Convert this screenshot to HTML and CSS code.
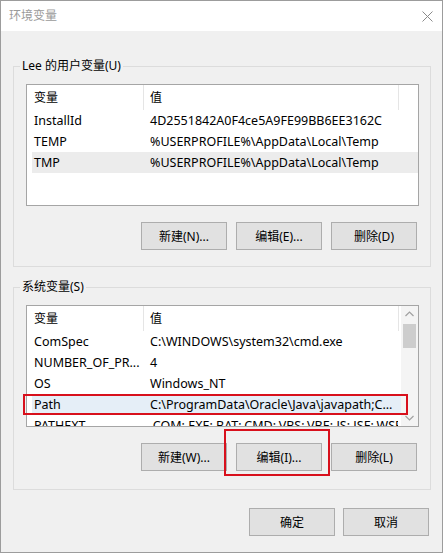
FILE: index.html
```html
<!DOCTYPE html>
<html lang="zh-CN">
<head>
<meta charset="utf-8">
<title>环境变量</title>
<link rel="stylesheet" href="styles.css">
</head>
<body>
<div class="window">
  <div class="titlebar">
    <span class="title">环境变量</span>
    <svg class="close" width="11" height="11" viewBox="0 0 11 11"><path d="M0.5 0.5 L10.5 10.5 M10.5 0.5 L0.5 10.5" stroke="#8a8a8a" stroke-width="1" fill="none"/></svg>
  </div>
  <div class="content">
    <fieldset class="group group-user">
      <legend>Lee 的用户变量(U)</legend>
      <div class="list">
        <div class="rows">
          <div class="row head"><span class="c1">变量</span><span class="c2">值</span></div>
          <div class="row"><span class="c1">InstallId</span><span class="c2">4D2551842A0F4ce5A9FE99BB6EE3162C</span></div>
          <div class="row"><span class="c1">TEMP</span><span class="c2">%USERPROFILE%\AppData\Local\Temp</span></div>
          <div class="row hover"><span class="c1">TMP</span><span class="c2">%USERPROFILE%\AppData\Local\Temp</span></div>
        </div>
      </div>
      <div class="btnrow">
        <button class="btn">新建(N)...</button>
        <button class="btn">编辑(E)...</button>
        <button class="btn">删除(D)</button>
      </div>
    </fieldset>
    <fieldset class="group group-sys">
      <legend>系统变量(S)</legend>
      <div class="list">
        <div class="rows">
          <div class="row head"><span class="c1">变量</span><span class="c2">值</span></div>
          <div class="row"><span class="c1">ComSpec</span><span class="c2">C:\WINDOWS\system32\cmd.exe</span></div>
          <div class="row"><span class="c1">NUMBER_OF_PR...</span><span class="c2">4</span></div>
          <div class="row"><span class="c1">OS</span><span class="c2">Windows_NT</span></div>
          <div class="row selected"><span class="c1">Path</span><span class="c2">C:\ProgramData\Oracle\Java\javapath;C...</span></div>
          <div class="row"><span class="c1">PATHEXT</span><span class="c2">.COM;.EXE;.BAT;.CMD;.VBS;.VBE;.JS;.JSE;.WSF;.WSH;.MSC</span></div>
        </div>
        <div class="scrollbar">
          <svg class="arrow" width="17" height="17" viewBox="0 0 17 17"><path d="M4.5 10 L8.5 6 L12.5 10" stroke="#a0a0a0" stroke-width="1.2" fill="none"/></svg>
          <div class="track"><div class="thumb"></div></div>
          <svg class="arrow" width="17" height="17" viewBox="0 0 17 17"><path d="M4.5 7 L8.5 11 L12.5 7" stroke="#a0a0a0" stroke-width="1.2" fill="none"/></svg>
        </div>
      </div>
      <div class="btnrow">
        <button class="btn">新建(W)...</button>
        <button class="btn">编辑(I)...</button>
        <button class="btn">删除(L)</button>
      </div>
    </fieldset>
    <div class="footer">
      <button class="btn">确定</button>
      <button class="btn">取消</button>
    </div>
  </div>
  <div class="mark mark-path"></div>
  <div class="mark mark-edit"></div>
</div>
</body>
</html>
```

FILE: styles.css
```css
* { box-sizing: border-box; }
html, body { margin: 0; padding: 0; background: #f0f0f0; }
body {
  font-family: "Noto Sans", "Noto Sans CJK SC", sans-serif;
  font-size: 12px;
  color: #000;
}
.window {
  position: relative;
  width: 443px;
  height: 553px;
  border: 1px solid #9c9c9c;
  background: #f0f0f0;
  display: flex;
  flex-direction: column;
}
.titlebar {
  height: 30px;
  flex: none;
  background: #fff;
  display: flex;
  align-items: center;
  justify-content: space-between;
  padding: 0 9px 0 8px;
}
.title { color: #9a9a9a; font-size: 12px; line-height: 16px; }
.content {
  padding: 0 11px 0 12px;
  display: flex;
  flex-direction: column;
}
.group {
  margin: 0;
  border: 1px solid #dcdcdc;
  padding: 10px 11px 16px 12px;
  min-width: 0;
}
.group-user { margin-top: 27px; }
.group-sys { margin-top: 12px; padding-bottom: 18px; }
.group legend {
  font-size: 12px;
  line-height: 16px;
  padding: 0 2px;
  margin-left: -6px;
}
.list {
  width: 393px;
  height: 122px;
  border: 1px solid #a5a5a5;
  background: #fff;
  display: flex;
  overflow: hidden;
}
.rows {
  flex: 1;
  padding-left: 5px;
  overflow: hidden;
  font-size: 12.5px;
}
.row {
  display: grid;
  grid-template-columns: 112px 255px;
  height: 21px;
  line-height: 21px;
  white-space: nowrap;
}
.row span { overflow: hidden; border-right: 1px solid transparent; }
.row .c1 { padding-left: 2px; }
.row .c2 { padding-left: 6px; }
.row.head { height: 25px; line-height: 25px; font-size: 12px; }
.row.head span { border-right-color: #e5e5e5; }
.row.hover { background: #ececec; }
.row.selected { background: #e5eef7; }
.scrollbar {
  width: 17px;
  flex: none;
  background: #f4f4f4;
  display: flex;
  flex-direction: column;
}
.scrollbar .arrow { flex: none; display: block; }
.track { flex: 1; padding: 1px 2px; }
.thumb { height: 24px; background: #cdcdcd; }
.btnrow {
  display: flex;
  justify-content: flex-end;
  gap: 9px;
  margin-top: 16px;
  margin-right: 2px;
}
.btn {
  width: 86px;
  height: 28px;
  background: #e1e1e1;
  border: 1px solid #adadad;
  font: inherit;
  color: #000;
  padding: 0;
}
.footer {
  display: flex;
  justify-content: flex-end;
  gap: 8px;
  margin-top: 18px;
  margin-right: 2px;
}
.mark {
  position: absolute;
  border: 2px solid #d8101c;
}
.mark-path { left: 22px; top: 393px; width: 385px; height: 21px; }
.mark-edit { left: 223px; top: 428px; width: 106px; height: 47px; }
```
